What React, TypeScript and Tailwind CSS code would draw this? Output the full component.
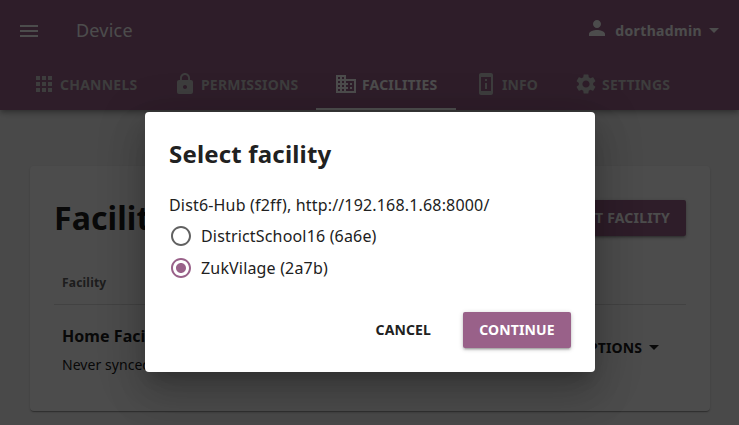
import React from "react";
import {
  MdApps,
  MdArrowDropDown,
  MdBusiness,
  MdLock,
  MdMenu,
  MdPermDeviceInformation,
  MdPerson,
  MdRadioButtonChecked,
  MdRadioButtonUnchecked,
  MdSettings,
} from "react-icons/md";

const tabs = [
  { label: "CHANNELS", Icon: MdApps, width: "w-[139px]", spacing: "pl-4 tracking-[0.24px]" },
  { label: "PERMISSIONS", Icon: MdLock, width: "w-[157px]", spacing: "pl-4 tracking-[0.18px]" },
  { label: "FACILITIES", Icon: MdBusiness, width: "w-[140px]", spacing: "pl-[18px] tracking-[0.18px]", active: true },
  { label: "INFO", Icon: MdPermDeviceInformation, width: "w-[98px]", spacing: "pl-4 tracking-[0.1px]" },
  { label: "SETTINGS", Icon: MdSettings, width: "w-[130px]", spacing: "pl-4 tracking-[0.18px]" },
];

function Header() {
  return (
    <header className="relative h-[110px] bg-[#996189] text-white shadow-[0_2px_4px_-1px_rgba(0,0,0,0.2),0_4px_5px_rgba(0,0,0,0.14),0_1px_10px_rgba(0,0,0,0.12)]">
      <div className="flex h-[60px] items-center pl-[17px] pr-[13px] pt-[2px]">
        <MdMenu size={24} />
        <h1 className="mb-[2px] ml-[35px] grow text-[18px] leading-6 tracking-[0.22px]">Device</h1>
        <MdPerson size={24} className="mb-[6px]" />
        <span className="mb-[2px] ml-[6px] text-[14px] font-bold tracking-[0.35px]">dorthadmin</span>
        <MdArrowDropDown size={24} className="mb-[2px]" />
      </div>
      <nav className="flex h-[50px] gap-[2px] pl-4">
        {tabs.map(({ label, Icon, width, spacing, active }) => (
          <div
            key={label}
            className={`${width} ${spacing} flex shrink-0 items-center border-b-2 text-[14px] font-bold ${
              active ? "border-white text-white" : "border-transparent text-[#cbcbcb]"
            }`}
          >
            <Icon size={24} className="mr-1 shrink-0" />
            {label}
          </div>
        ))}
      </nav>
    </header>
  );
}

function FacilitiesCard() {
  return (
    <main className="ml-[30px] mt-14 h-[245px] w-[680px] rounded bg-white px-6 pt-[34px] shadow-[0_2px_1px_-1px_rgba(0,0,0,0.2),0_1px_1px_rgba(0,0,0,0.14),0_1px_3px_rgba(0,0,0,0.12)]">
      <div className="flex h-9 items-center justify-between">
        <h1 className="text-[32px] font-bold leading-9 tracking-[0.1px]">Facilities</h1>
        <button className="h-9 rounded-[2px] bg-[#996189] px-4 pb-[2px] text-[14px] font-bold tracking-[0.18px] text-white shadow-[0_1px_5px_rgba(0,0,0,0.2),0_2px_2px_rgba(0,0,0,0.14),0_3px_1px_-2px_rgba(0,0,0,0.12)]">
          IMPORT FACILITY
        </button>
      </div>
      <div className="mt-[29px] flex h-[40px] items-center border-b border-[#dedede] pb-[4px] pl-2 text-[12px] font-bold tracking-[0.2px] text-[#616161]">
        Facility
      </div>
      <div className="flex justify-between pl-2 pr-[20px] pt-[19px]">
        <div>
          <div className="text-[16px] font-bold leading-6 tracking-[0.05px]">Home Facility</div>
          <div className="mt-[5px] text-[14px] leading-6 tracking-[0.05px]">Never synced</div>
        </div>
        <div className="mt-[11px] flex h-6 items-center text-[14px] font-bold tracking-[0.1px]">
          OPTIONS
          <MdArrowDropDown size={24} />
        </div>
      </div>
    </main>
  );
}

function RadioOption({ label, checked = false }: { label: string; checked?: boolean }) {
  return (
    <label className="flex h-8 items-center text-[16px] tracking-[0.17px]">
      {checked ? (
        <MdRadioButtonChecked size={24} className="mr-2 text-[#996189]" />
      ) : (
        <MdRadioButtonUnchecked size={24} className="mr-2 text-[#616161]" />
      )}
      {label}
    </label>
  );
}

function SelectFacilityDialog() {
  return (
    <div className="absolute inset-0 bg-black/70">
      <section
        role="dialog"
        className="absolute left-[145px] top-[112px] flex h-[260px] w-[450px] flex-col rounded bg-white px-6 shadow-[0_11px_15px_-7px_rgba(0,0,0,0.2),0_24px_38px_3px_rgba(0,0,0,0.14),0_9px_46px_8px_rgba(0,0,0,0.12)]"
      >
        <h2 className="mt-[26px] text-[24px] font-bold leading-8 tracking-[0.18px]">Select facility</h2>
        <p className="mb-[3px] mt-[23px] text-[16px] leading-6 tracking-[0.17px]">
          Dist6-Hub (f2ff), http://192.168.1.68:8000/
        </p>
        <RadioOption label="DistrictSchool16 (6a6e)" />
        <RadioOption label="ZukVilage (2a7b)" checked />
        <div className="mt-7 flex justify-end gap-4 text-[14px] font-bold tracking-[0.12px]">
          <button className="h-9 px-4 pb-[2px]">CANCEL</button>
          <button className="h-9 w-[108px] rounded-[2px] bg-[#996189] pb-[2px] text-white shadow-[0_1px_5px_rgba(0,0,0,0.2),0_2px_2px_rgba(0,0,0,0.14),0_3px_1px_-2px_rgba(0,0,0,0.12)]">
            CONTINUE
          </button>
        </div>
      </section>
    </div>
  );
}

export default function App() {
  return (
    <div className="relative h-[425px] w-[739px] overflow-hidden bg-[#f5f5f5] font-['Noto_Sans',sans-serif] text-[#212121]">
      <Header />
      <FacilitiesCard />
      <SelectFacilityDialog />
    </div>
  );
}
